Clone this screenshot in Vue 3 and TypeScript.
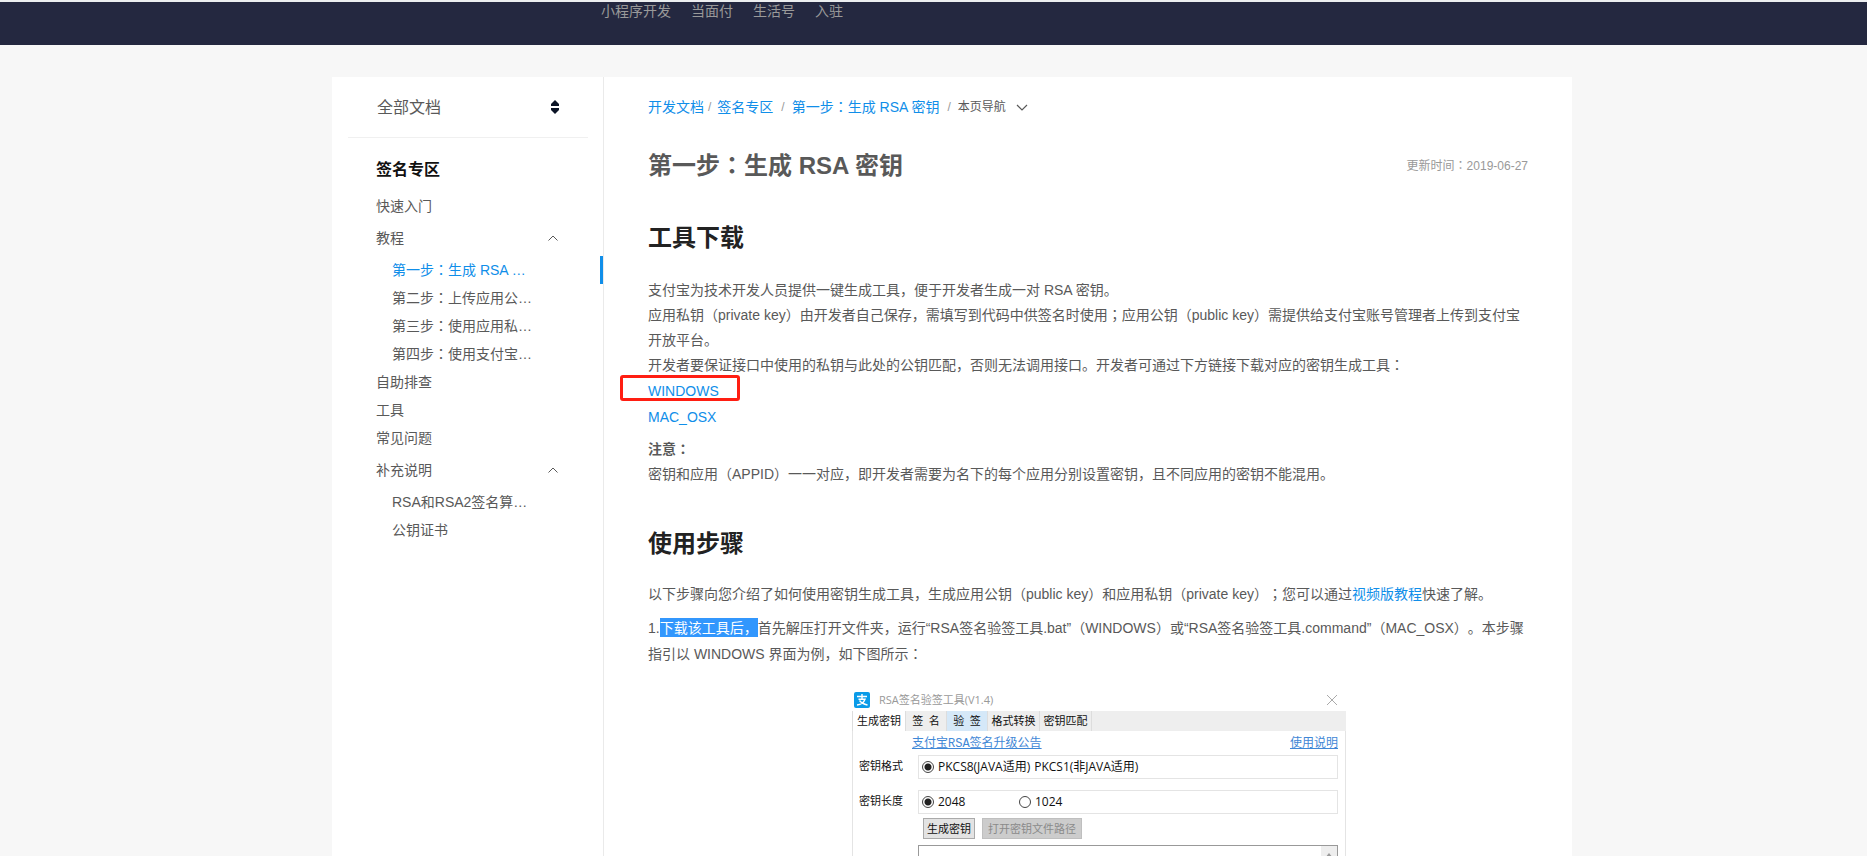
<script setup lang="ts">
import { ref } from 'vue'

interface NavItem {
  kind: 'item' | 'group' | 'sub'
  text: string
  step?: string
  active?: boolean
}

const topLinks: string[] = ['小程序开发', '当面付', '生活号', '入驻']

const nav: NavItem[] = [
  { kind: 'item', text: '快速入门' },
  { kind: 'group', text: '教程' },
  { kind: 'sub', step: '第一步', text: '生成 RSA …', active: true },
  { kind: 'sub', step: '第二步', text: '上传应用公…' },
  { kind: 'sub', step: '第三步', text: '使用应用私…' },
  { kind: 'sub', step: '第四步', text: '使用支付宝…' },
  { kind: 'item', text: '自助排查' },
  { kind: 'item', text: '工具' },
  { kind: 'item', text: '常见问题' },
  { kind: 'group', text: '补充说明' },
  { kind: 'sub', text: 'RSA和RSA2签名算…' },
  { kind: 'sub', text: '公钥证书' },
]

const format = ref('PKCS8')
const bits = ref('2048')
const output = ref('')
</script>

<template>
  <div class="page">
    <header class="topbar">
      <nav class="topnav">
        <a v-for="t in topLinks" :key="t" href="#">{{ t }}</a>
      </nav>
    </header>

    <div class="sheet">
      <aside class="side">
        <button class="all" type="button">
          <span>全部文档</span>
          <svg width="8" height="14" viewBox="0 0 8 14" aria-hidden="true">
            <path d="M4 0 8 4V6H0V4ZM0 8H8V10L4 14 0 10Z" fill="#0b1426" />
          </svg>
        </button>
        <h2 class="side-title">签名专区</h2>
        <ul class="menu">
          <li v-for="n in nav" :key="(n.step ?? '') + n.text" :class="[n.kind, { active: n.active }]">
            <button v-if="n.kind === 'group'" type="button">
              <span>{{ n.text }}</span>
              <svg width="10" height="6" viewBox="0 0 10 6" aria-hidden="true">
                <path d="M.5 5.5 5 1l4.500 4.500" fill="none" stroke="#595959" />
              </svg>
            </button>
            <a v-else href="#"><template v-if="n.step">{{ n.step }}<span class="mid">：</span></template>{{ n.text }}</a>
          </li>
        </ul>
      </aside>

      <main class="doc">
        <nav class="crumbs">
          <a href="#">开发文档</a><span class="sep tight">/</span>
          <a href="#">签名专区</a><span class="sep">/</span>
          <a href="#">第一步<span class="mid">：</span>生成 RSA 密钥</a><span class="sep">/</span>
          <button type="button" class="onpage">
            本页导航
            <svg width="12" height="7" viewBox="0 0 12 7" aria-hidden="true">
              <path d="M1 1l5 5 5-5" fill="none" stroke="#595959" stroke-width="1.200" />
            </svg>
          </button>
        </nav>

        <div class="head">
          <h1>第一步<span class="mid">：</span>生成 RSA 密钥</h1>
          <span class="date">更新时间<span class="mid">：</span>2019-06-27</span>
        </div>

        <h2>工具下载</h2>
        <p>
          支付宝为技术开发人员提供一键生成工具，便于开发者生成一对 RSA 密钥。<br />
          应用私钥（private key）由开发者自己保存，需填写到代码中供签名时使用<span class="mid">；</span>应用公钥（public key）需提供给支付宝账号管理者上传到支付宝开放平台。<br />
          开发者要保证接口中使用的私钥与此处的公钥匹配，否则无法调用接口。开发者可通过下方链接下载对应的密钥生成工具<span class="mid">：</span>
        </p>
        <ul class="downloads">
          <li class="marked"><a href="#">WINDOWS</a></li>
          <li><a href="#">MAC_OSX</a></li>
        </ul>
        <p class="note">
          <strong>注意<span class="mid">：</span></strong><br />
          密钥和应用（APPID）一一对应，即开发者需要为名下的每个应用分别设置密钥，且不同应用的密钥不能混用。
        </p>

        <h2 class="second">使用步骤</h2>
        <p>
          以下步骤向您介绍了如何使用密钥生成工具，生成应用公钥（public key）和应用私钥（private key）<span class="mid">；</span>您可以通过<a href="#">视频版教程</a>快速了解。
        </p>
        <p class="step">
          1.<mark>下载该工具后，</mark>首先解压打开文件夹，运行“RSA签名验签工具.bat”（WINDOWS）或“RSA签名验签工具.command”（MAC_OSX）。本步骤指引以 WINDOWS 界面为例，如下图所示<span class="mid">：</span>
        </p>

        <div class="figure">
          <section class="tool">
            <div class="caption">
              <svg width="16" height="16" viewBox="0 0 16 16" aria-hidden="true">
                <rect width="16" height="16" rx="2" fill="#0a9be8" />
                <path d="M3 4.500h10M8 2v5M4.500 7.200h6.500C10 10 7.500 12.500 3 13M5.500 8.500C7 10.500 10 12.200 13.500 13" fill="none" stroke="#fff" stroke-width="1.400" />
              </svg>
              <span>RSA签名验签工具(V1.4)</span>
              <button type="button" class="close" aria-label="关闭">
                <svg width="12" height="12" viewBox="0 0 12 12" aria-hidden="true">
                  <path d="M1 1l10 10M11 1L1 11" stroke="#aaa" fill="none" />
                </svg>
              </button>
            </div>
            <div class="tabs">
              <button type="button" class="on">生成密钥</button>
              <button type="button" class="spaced">签&ensp;名</button>
              <button type="button" class="spaced hover">验&ensp;签</button>
              <button type="button">格式转换</button>
              <button type="button">密钥匹配</button>
            </div>
            <div class="panel">
              <div class="links">
                <a href="#">支付宝RSA签名升级公告</a>
                <a href="#">使用说明</a>
              </div>
              <div class="row">
                <span class="name">密钥格式</span>
                <div class="box">
                  <label><input v-model="format" type="radio" name="format" value="PKCS8" />PKCS8(JAVA适用)</label>
                  <span class="plain">PKCS1(非JAVA适用)</span>
                </div>
              </div>
              <div class="row">
                <span class="name">密钥长度</span>
                <div class="box">
                  <label class="wide"><input v-model="bits" type="radio" name="bits" value="2048" />2048</label>
                  <label><input v-model="bits" type="radio" name="bits" value="1024" />1024</label>
                </div>
              </div>
              <div class="actions">
                <button type="button">生成密钥</button>
                <button type="button" disabled>打开密钥文件路径</button>
              </div>
              <div class="output">
                <textarea v-model="output" aria-label="密钥"></textarea>
                <span class="scroll">
                  <svg width="8" height="5" viewBox="0 0 8 5" aria-hidden="true"><path d="M0 5 4 0l4 5z" fill="#999" /></svg>
                </span>
              </div>
            </div>
          </section>
        </div>
      </main>
    </div>
  </div>
</template>

<style>
body {
  margin: 0;
}
</style>

<style scoped>
.page {
  display: flex;
  flex-direction: column;
  height: 100vh;
  overflow: hidden;
  background: #f7f7f7;
  color: #595959;
  font: 14px/25px "Liberation Sans", "Noto Sans CJK SC", sans-serif;
  text-spacing-trim: space-all;
}
.page * {
  box-sizing: border-box;
}
.mid {
  font-family: "Noto Sans CJK TC", sans-serif;
  line-height: 1;
}
a {
  color: #108ee9;
  text-decoration: none;
}
button {
  padding: 0;
  border: 0;
  background: none;
  color: inherit;
  font: inherit;
  white-space: nowrap;
}
ul {
  margin: 0;
  padding: 0;
  list-style: none;
}
h1,
h2,
p {
  margin: 0;
}
svg {
  flex: none;
  display: block;
}

.topbar {
  flex: none;
  height: 45px;
  border-top: 2px solid #eceef0;
  background: #242840;
}
.topnav {
  display: flex;
  gap: 20px;
  padding-left: 601px;
  line-height: 18px;
}
.topnav a {
  color: #999;
}

.sheet {
  flex: 1;
  display: flex;
  align-self: center;
  width: 1240px;
  max-width: calc(100% - 37px);
  min-height: 0;
  margin: 32px 0 0 37px;
  background: #fff;
}
.side {
  flex: none;
  width: 272px;
  border-right: 1px solid #eaeaea;
}
.all {
  display: flex;
  align-items: center;
  justify-content: space-between;
  width: 240px;
  height: 61px;
  margin-left: 16px;
  padding: 0 29px;
  border-bottom: 1px solid #f0f0f0;
  font-size: 16px;
}
.side-title {
  margin: 19px 0 9px 44px;
  color: #111;
  font-size: 16px;
  line-height: 26px;
}
.menu li {
  display: flex;
  padding-left: 44px;
  line-height: 28px;
}
.menu a {
  color: #595959;
}
.menu .group button {
  display: flex;
  flex: 1;
  align-items: center;
  justify-content: space-between;
  padding-right: 45px;
  line-height: 36px;
}
.menu .sub {
  padding-left: 60px;
}
.menu .active {
  border-right: 3px solid #108ee9;
}
.menu .active a {
  color: #108ee9;
}

.doc {
  flex: 1;
  min-width: 0;
  padding: 18px 44px 0;
}
.crumbs {
  display: flex;
  align-items: center;
}
.sep {
  margin: 0 7px 0 8px;
  color: #999;
  font-size: 12px;
}
.sep.tight {
  margin: 0 6px 0 4px;
}
.onpage {
  display: flex;
  align-items: center;
  gap: 10px;
  font-size: 12px;
}
.head {
  display: flex;
  align-items: center;
  justify-content: space-between;
  margin: 28px 0 36px;
}
h1,
h2 {
  font-size: 24px;
  line-height: 36px;
}
.date {
  color: #999;
  font-size: 12px;
}
.doc h2 {
  margin-bottom: 22px;
  color: #222;
}
.doc .second {
  margin-top: 39px;
  margin-bottom: 20px;
}
.downloads {
  line-height: 26px;
}
.marked {
  position: relative;
}
.marked::after {
  content: "";
  box-sizing: border-box;
  position: absolute;
  top: -3px;
  left: -28px;
  width: 120px;
  height: 26px;
  border: 3px solid #ff1e12;
  border-radius: 3px;
  pointer-events: none;
}
.note {
  margin-top: 7px;
}
.step {
  margin-top: 8px;
  line-height: 26px;
}
mark {
  padding: 2px 0 1px;
  background: #3297fd;
  color: #fff;
}

.figure {
  display: flex;
  justify-content: center;
  margin-top: 22px;
  padding-left: 22px;
}
.tool {
  width: 494px;
  color: #111;
  font: 11px/16px "Open Sans", "Noto Sans CJK SC", sans-serif;
}
.caption {
  display: flex;
  align-items: center;
  gap: 9px;
  height: 22px;
  padding: 0 8px 0 2px;
  color: #999;
}
.close {
  margin-left: auto;
}
.tabs {
  display: flex;
  height: 20px;
  background: #eee;
}
.tabs button {
  width: 52px;
  border-right: 1px solid #ddd;
}
.tabs .on {
  width: 54px;
  border-left: 1px solid #ddd;
  background: #fff;
}
.tabs .spaced {
  width: 41px;
}
.tabs .hover {
  background: #d5e8f8;
}
.panel {
  padding: 5px 7px 0 6px;
  border: 1px solid #e4e4e4;
  border-top: 0;
}
.links {
  display: flex;
  justify-content: space-between;
  padding: 0 0 3px 53px;
  font: 12px/16px "Liberation Mono", "Noto Sans CJK SC", monospace;
}
.links a {
  color: #3f87d6;
  text-decoration: underline;
}
.row {
  display: flex;
  margin-bottom: 11px;
}
.name {
  width: 59px;
  line-height: 22px;
}
.box {
  flex: 1;
  display: flex;
  align-items: center;
  height: 24px;
  padding-left: 3px;
  border: 1px solid #e4e4e4;
  font-size: 12px;
}
.box label {
  display: flex;
  align-items: center;
  gap: 4px;
}
.box .wide {
  width: 97px;
}
.plain {
  margin-left: 4px;
}
input {
  appearance: none;
  width: 12px;
  height: 12px;
  margin: 0;
  border: 1px solid #444;
  border-radius: 50%;
}
input:checked {
  background: radial-gradient(circle, #222 3px, #fff 4px);
}
.actions {
  display: flex;
  gap: 7px;
  margin: -7px 0 6px 64px;
}
.actions button {
  height: 21px;
  padding: 0 3px;
  border: 1px solid #aaa;
  background: #e3e3e3;
}
.actions button:disabled {
  padding: 0 5px;
  border-color: #bfbfbf;
  background: #ccc;
  color: #8a8a8a;
}
.output {
  display: flex;
  height: 80px;
  margin-left: 59px;
  border: 1px solid #999;
}
textarea {
  flex: 1;
  border: 0;
  resize: none;
}
.scroll {
  width: 16px;
  padding: 7px 4px;
  background: #eee;
}
</style>
